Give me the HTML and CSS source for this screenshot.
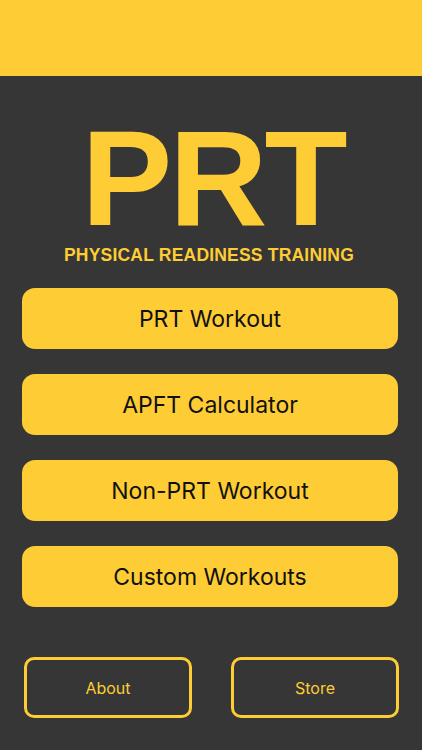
FILE: index.html
```html
<!DOCTYPE html>
<html lang="en">
<head>
    <meta charset="UTF-8">
    <title>PRT</title>
    <link rel="stylesheet" href="styles.css">
</head>
<body>
    <div class="topbar"></div>
    <div class="main">
        <div class="logo">
            <h1 class="logo-title">PRT</h1>
            <p class="logo-sub">PHYSICAL READINESS TRAINING</p>
        </div>
        <ul class="menu">
            <li class="menu-btn">PRT Workout</li>
            <li class="menu-btn">APFT Calculator</li>
            <li class="menu-btn">Non-PRT Workout</li>
            <li class="menu-btn">Custom Workouts</li>
        </ul>
        <div class="footer">
            <a class="ghost-btn" href="#">About</a>
            <a class="ghost-btn" href="#">Store</a>
        </div>
    </div>
</body>
</html>
```

FILE: styles.css
```css
*{
    margin: 0;
    padding: 0;
    list-style: none;
    box-sizing: border-box;
}
html,body{
    width: 100%;
    height: 100%;
}
body{
    background: #363636;
    font-family: "Liberation Sans", Arial, sans-serif;
    overflow: hidden;
}
.topbar{
    height: 76px;
    background: #fecc35;
}
.main{
    display: flex;
    flex-direction: column;
    padding-top: 43px;
}
.logo{
    display: flex;
    flex-direction: column;
    align-items: center;
    color: #fecc35;
}
.logo-title{
    font-size: 136px;
    line-height: 118px;
    font-weight: bold;
    letter-spacing: -3px;
    padding-left: 4px;
}
.logo-sub{
    margin-top: 9px;
    font-size: 17.5px;
    line-height: 18px;
    font-weight: bold;
    letter-spacing: 0.2px;
    padding-right: 4px;
}
.menu{
    display: flex;
    flex-direction: column;
    gap: 25px;
    margin: 24px 24px 0 22px;
}
.menu-btn{
    height: 61px;
    display: flex;
    align-items: center;
    justify-content: center;
    background: #fecc35;
    border-radius: 13px;
    color: #111;
    font-family: Inter, "Liberation Sans", sans-serif;
    font-size: 23px;
    cursor: pointer;
}
.footer{
    display: flex;
    justify-content: space-between;
    margin: 50px 23px 0 24px;
}
.ghost-btn{
    width: 168px;
    height: 61px;
    display: flex;
    align-items: center;
    justify-content: center;
    border: 3px solid #fecc35;
    border-radius: 10px;
    color: #fecc35;
    font-family: Inter, "Liberation Sans", sans-serif;
    font-size: 16px;
    text-decoration: none;
}
```
